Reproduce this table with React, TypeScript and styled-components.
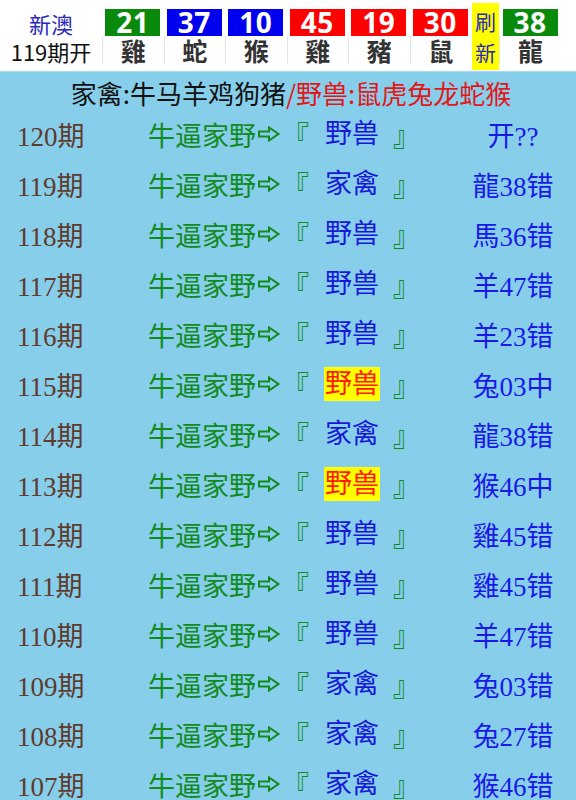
import React from "react";
import styled, { createGlobalStyle } from "styled-components";

const Global = createGlobalStyle`
  html, body { margin: 0; padding: 0; background: #ffffff; }
  body { font-family: "Noto Sans CJK SC", "Noto Sans", sans-serif; overflow: hidden; }
`;

const Page = styled.div`
  width: 576px;
  height: 800px;
  overflow: hidden;
`;

const Header = styled.div`
  display: grid;
  grid-template-columns: 102px repeat(6, 61.5px) 28px 62px;
  height: 71px;
  background: #ffffff;
`;

const Brand = styled.div`
  display: flex;
  flex-direction: column;
  align-items: center;
  justify-content: center;
  padding-top: 2px;
  font-size: 22px;
  line-height: 28px;
`;

const BrandName = styled.div`
  color: #2a2ab8;
`;

const BrandIssue = styled.div`
  color: #111111;
`;

const Ball = styled.div`
  display: flex;
  flex-direction: column;
  align-items: center;
  padding-top: 9px;
`;

const Num = styled.div<{ $bg: string }>`
  width: 55px;
  height: 27px;
  background: ${(p) => p.$bg};
  color: #ffffff;
  font-family: "Open Sans", "Noto Sans", sans-serif;
  font-weight: 700;
  font-size: 28px;
  line-height: 27px;
  text-align: center;
  letter-spacing: 0.5px;
`;

const Zodiac = styled.div`
  align-self: stretch;
  height: 28px;
  border-left: 1px solid #e4e4e4;
  color: #333333;
  font-weight: 700;
  font-size: 25px;
  line-height: 28px;
  text-align: center;
`;

const Refresh = styled.div`
  margin: 3px 0 1px 1px;
  width: 27px;
  background: #ffff00;
  color: #2a2ab8;
  font-size: 21px;
  line-height: 31px;
  text-align: center;
  display: flex;
  flex-direction: column;
  justify-content: center;
`;

const Board = styled.div`
  background: #87ceeb;
  border-top: 1px solid #a9dcf0;
  height: 729px;
`;

const Title = styled.div`
  height: 34px;
  padding-top: 3px;
  display: flex;
  justify-content: center;
  align-items: center;
  font-size: 26px;
  color: #111111;
  padding-left: 6px;
  white-space: nowrap;
`;

const Red = styled.span`
  color: #e01818;
`;

const Row = styled.div`
  display: grid;
  grid-template-columns: 148px 134px 27px 84px 27px 1fr;
  align-items: center;
  height: 50px;
  font-family: "Liberation Serif", "Noto Sans CJK SC", serif;
  font-size: 27px;
  white-space: nowrap;
`;

const Period = styled.div`
  padding-left: 17px;
  color: #5e3b2c;
`;

const Label = styled.div`
  color: #128a1e;
  display: flex;
  align-items: center;
  white-space: nowrap;
  & > svg {
    flex: 0 0 auto;
  }
`;

const Bracket = styled.div`
  color: #128a1e;
`;

const Pick = styled.div`
  display: flex;
  justify-content: flex-start;
  padding-left: 15px;
`;

const PickText = styled.span<{ $hot: boolean }>`
  color: ${(p) => (p.$hot ? "#ff1a00" : "#1818d8")};
  background: ${(p) => (p.$hot ? "#ffff00" : "transparent")};
  line-height: 34px;
  padding: 0 1px;
`;

const Result = styled.div`
  color: #1a1ae8;
  text-align: center;
  padding-left: 30px;
`;

const Arrow = () => (
  <svg width="24" height="16" viewBox="0 0 24 16" style={{ marginLeft: 1 }}>
    <path
      d="M2 5.5 H12 V1.5 L21.5 8 L12 14.5 V10.5 H2 Z"
      fill="none"
      stroke="#128a1e"
      strokeWidth="2"
      strokeLinejoin="miter"
    />
  </svg>
);

const balls = [
  { n: "21", z: "雞", c: "#0a8a0a" },
  { n: "37", z: "蛇", c: "#0000ee" },
  { n: "10", z: "猴", c: "#0000ee" },
  { n: "45", z: "雞", c: "#ff0000" },
  { n: "19", z: "豬", c: "#ff0000" },
  { n: "30", z: "鼠", c: "#ff0000" },
];

const rows: { p: string; k: string; r: string }[] = [
  { p: "120", k: "野兽", r: "开??" },
  { p: "119", k: "家禽", r: "龍38错" },
  { p: "118", k: "野兽", r: "馬36错" },
  { p: "117", k: "野兽", r: "羊47错" },
  { p: "116", k: "野兽", r: "羊23错" },
  { p: "115", k: "野兽", r: "兔03中" },
  { p: "114", k: "家禽", r: "龍38错" },
  { p: "113", k: "野兽", r: "猴46中" },
  { p: "112", k: "野兽", r: "雞45错" },
  { p: "111", k: "野兽", r: "雞45错" },
  { p: "110", k: "野兽", r: "羊47错" },
  { p: "109", k: "家禽", r: "兔03错" },
  { p: "108", k: "家禽", r: "兔27错" },
  { p: "107", k: "家禽", r: "猴46错" },
];

export default function App() {
  return (
    <Page>
      <Global />
      <Header>
        <Brand>
          <BrandName>新澳</BrandName>
          <BrandIssue>119期开</BrandIssue>
        </Brand>
        {balls.map((b, i) => (
          <Ball key={i}>
            <Num $bg={b.c}>{b.n}</Num>
            <Zodiac>{b.z}</Zodiac>
          </Ball>
        ))}
        <Refresh>
          <span>刷</span>
          <span>新</span>
        </Refresh>
        <Ball>
          <Num $bg="#0a8a0a">38</Num>
          <Zodiac>龍</Zodiac>
        </Ball>
      </Header>
      <Board>
        <Title>
          家禽:牛马羊鸡狗猪<Red>/野兽:鼠虎兔龙蛇猴</Red>
        </Title>
        {rows.map((r) => (
          <Row key={r.p}>
            <Period>{r.p}期</Period>
            <Label>
              <span>牛逼家野</span>
              <Arrow />
            </Label>
            <Bracket>『</Bracket>
            <Pick>
              <PickText $hot={r.r.endsWith("中")}>{r.k}</PickText>
            </Pick>
            <Bracket>』</Bracket>
            <Result>{r.r}</Result>
          </Row>
        ))}
      </Board>
    </Page>
  );
}
